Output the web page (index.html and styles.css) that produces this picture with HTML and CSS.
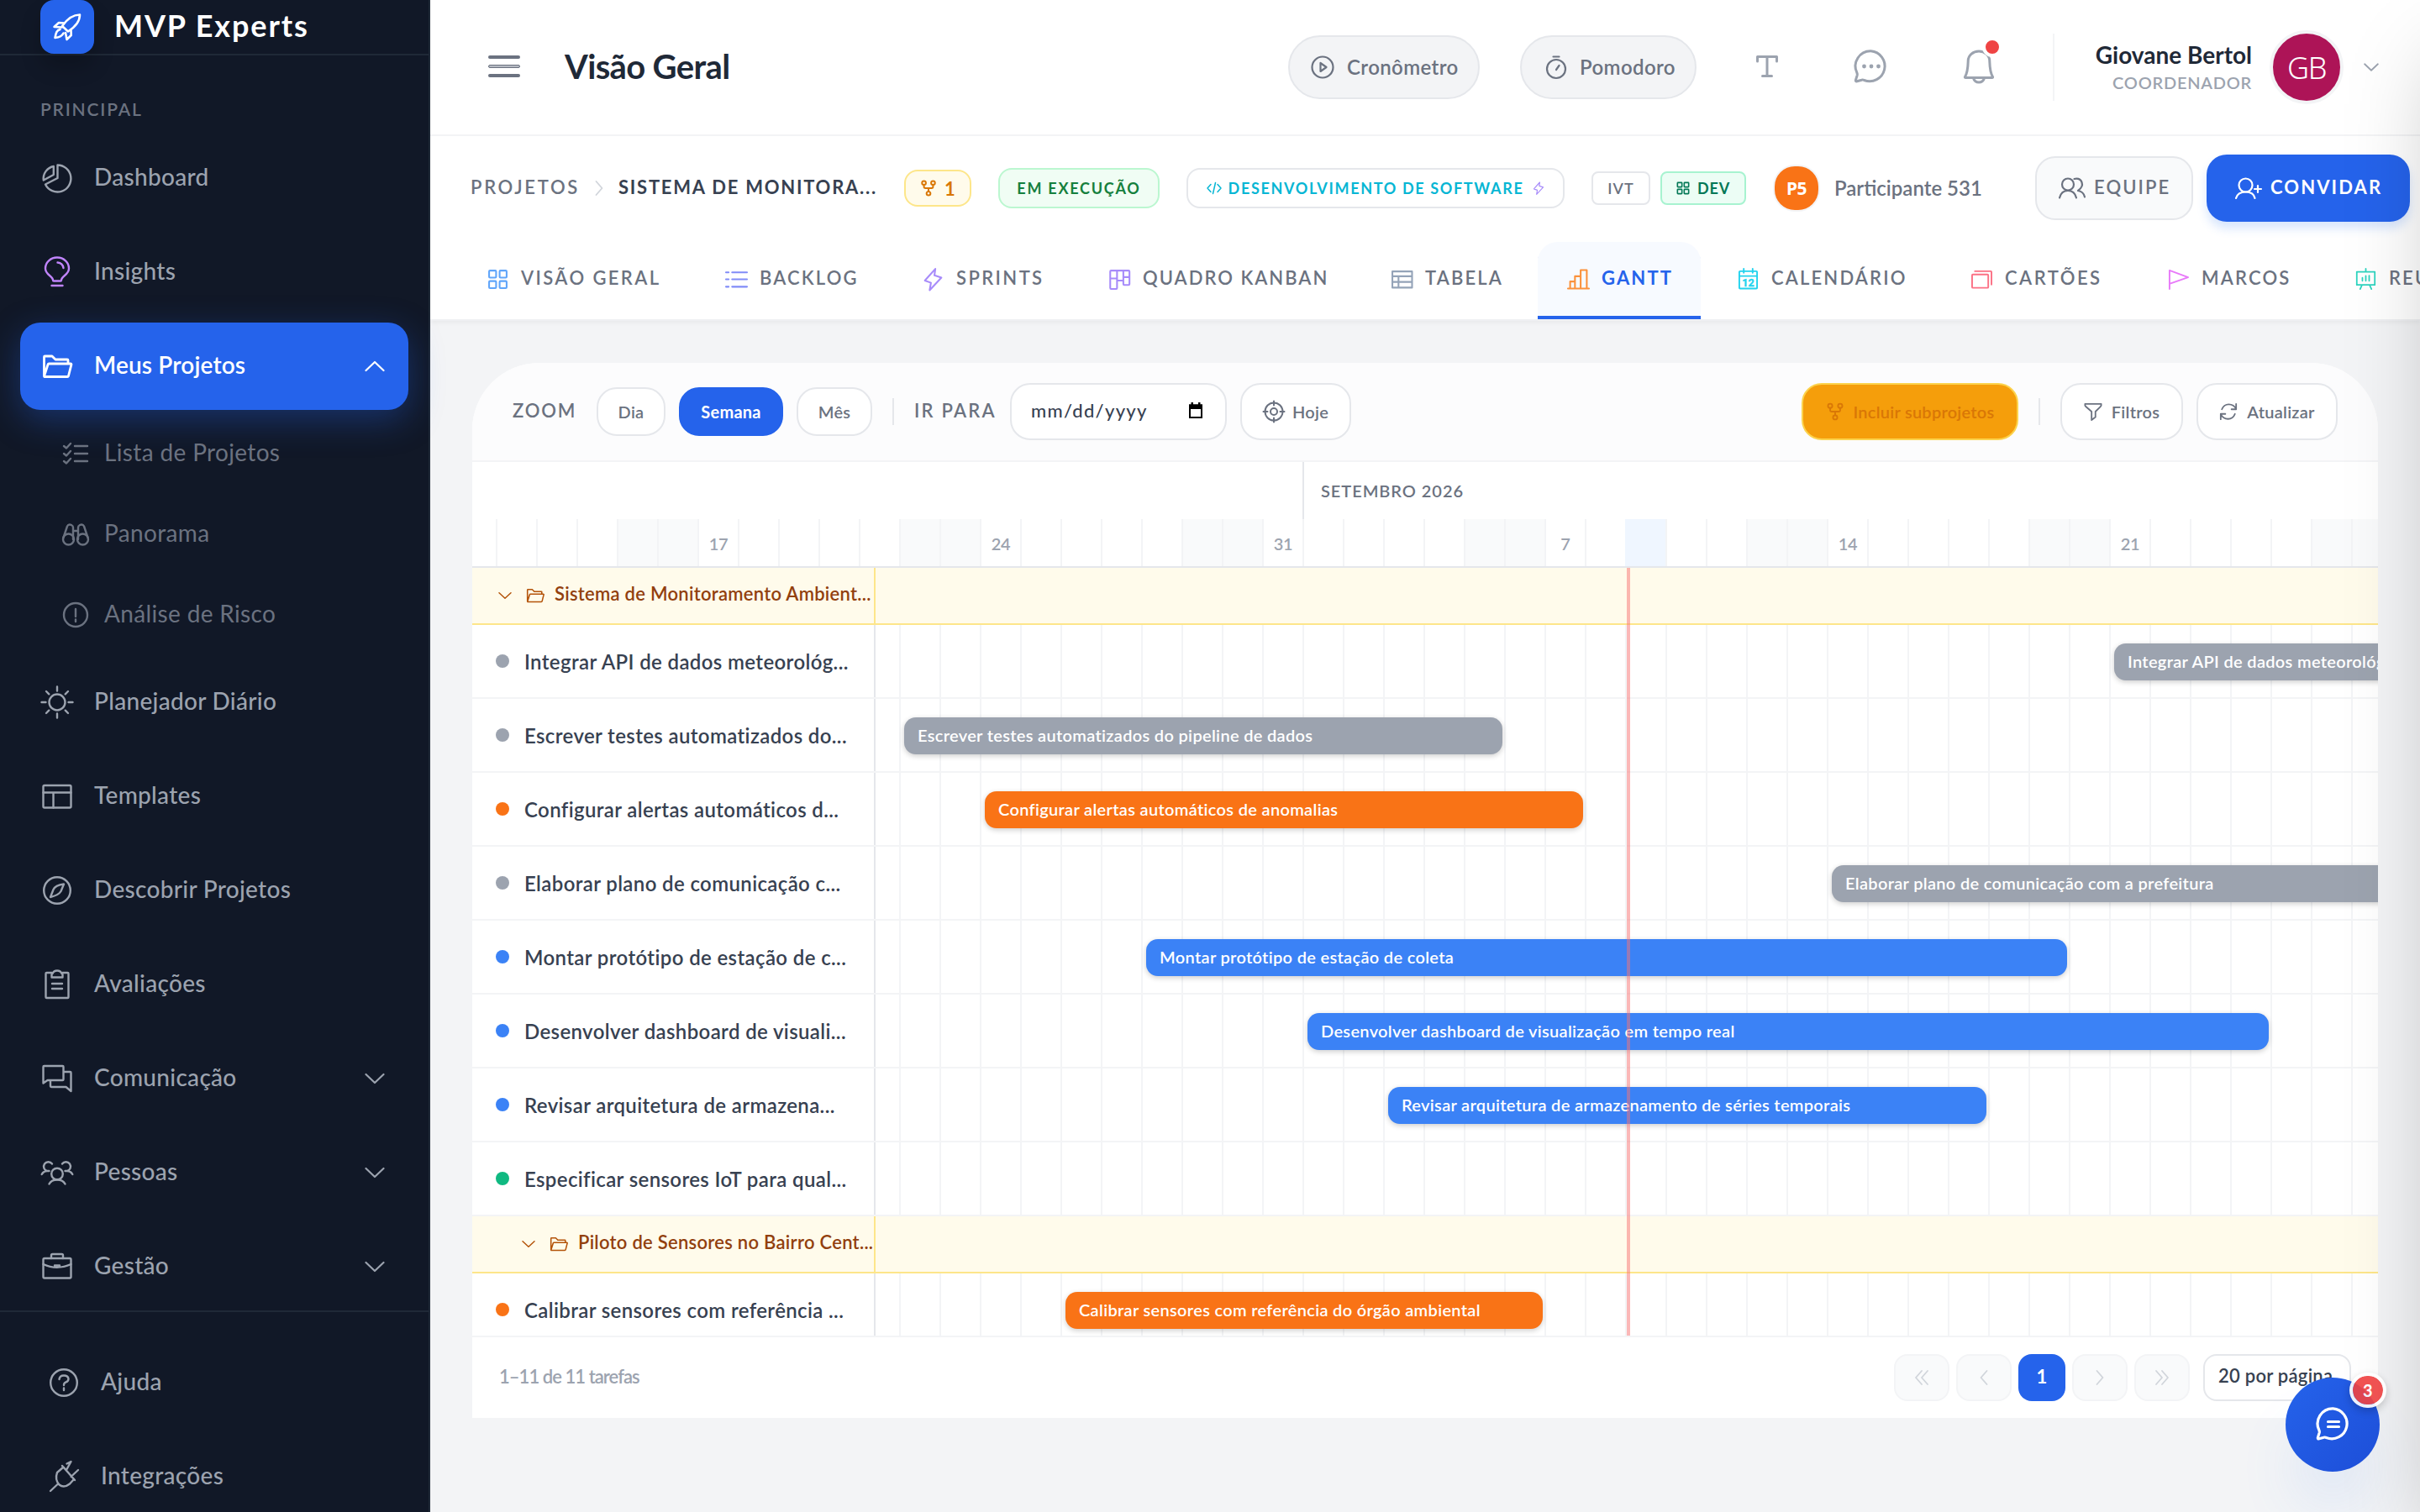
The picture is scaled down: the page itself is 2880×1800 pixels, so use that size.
FILE: index.html
```html
<!DOCTYPE html>
<html lang="pt-BR">
<head>
<meta charset="utf-8">
<title>MVP Experts – Visão Geral</title>
<link rel="stylesheet" href="styles.css">
</head>
<body>
<svg class="sprite" aria-hidden="true">
  <symbol id="i-down" viewBox="0 0 24 24"><path d="M1.500 7 12 17 22.500 7"/></symbol>
  <symbol id="i-up" viewBox="0 0 24 24"><path d="M1.500 17 12 7 22.500 17"/></symbol>
  <symbol id="i-folder" viewBox="0 0 40 40"><path d="M4.500 32V9q0-1 1-1H14l4 4h14q1 0 1 1v4M4.500 32 9 18q.3-1 1.300-1H36q1.200 0 .9 1.200L33.500 31.500q-.3 1-1.300 1H4.700"/></symbol>
  <symbol id="i-fork" viewBox="0 0 24 24"><circle cx="5.500" cy="4.500" r="2.800"/><circle cx="18.500" cy="4.500" r="2.800"/><circle cx="12" cy="19.500" r="2.800"/><path d="M5.500 7.300V10q0 2 2 2h9q2 0 2-2V7.300M12 12v4.700"/></symbol>
  <symbol id="i-grid" viewBox="0 0 24 24"><rect x="2" y="2" width="8" height="8" rx="1"/><rect x="14" y="2" width="8" height="8" rx="1"/><rect x="2" y="14" width="8" height="8" rx="1"/><rect x="14" y="14" width="8" height="8" rx="1"/></symbol>
  <symbol id="i-bolt" viewBox="0 0 24 28"><path d="M14.500 2 2.500 15.500l7 2.500L8 26.500 21.500 12l-8-2.500z"/></symbol>
</svg>

<div class="app">
  <aside class="sidebar">
    <div class="brand">
      <span class="brand-mark"><svg width="36" height="36" viewBox="0 0 36 36"><path d="M33 3.500C25 3.500 19 7 12 17l7 6.500C30 16.500 33 10.500 33 3.500ZM14.500 13.500 8 13 2.500 18l9 .5M22.500 21.500l.2 6.500-5.200 5-1.500-8M9.500 21c-4 1-5 4-6 10 5.500-.5 8.500-2 10-5.500"/></svg></span>
      <span class="brand-name">MVP Experts</span>
    </div>
    <div class="side-title">PRINCIPAL</div>
    <nav class="side-nav">
      <a class="nav-item"><svg viewBox="0 0 40 40"><path d="M20.500 4.500A16 16 0 1 1 6 27.500L20.500 20ZM15.800 6A15 15 0 0 0 3.800 22.500L15.800 16Z"/></svg><span class="t">Dashboard</span></a>
      <a class="nav-item insight"><svg viewBox="0 0 40 40"><path d="M15 29.500c0-5-9-6-9-14a14 13 0 0 1 28 0c0 8-9 9-9 14q0 1-1 1h-8q-1 0-1-1zM13.500 36h13M20.500 8.500q6 .5 7 6.500"/></svg><span class="t">Insights</span></a>
      <a class="nav-item active"><svg><use href="#i-folder"/></svg><span class="t">Meus Projetos</span><svg class="chev"><use href="#i-up"/></svg></a>
      <a class="nav-sub"><svg viewBox="0 0 32 32"><path d="M15 7h15M15 16h15M15 25h15M2 7l3 2.500L10 4M2 16l3 2.500L10 13M2 25l3 2.500 5-5.500"/></svg><span class="t">Lista de Projetos</span></a>
      <a class="nav-sub"><svg viewBox="0 0 32 32"><circle cx="7.500" cy="22" r="6.500"/><circle cx="24.500" cy="22" r="6.500"/><path d="M1.500 20 6 6.500q1.500-3 5-1.500 2 1 2 3v14M30.500 20 26 6.500q-1.500-3-5-1.500-2 1-2 3v14M13 12h6"/></svg><span class="t">Panorama</span></a>
      <a class="nav-sub"><svg viewBox="0 0 32 32"><circle cx="16" cy="16" r="14"/><path d="M16 9v9M16 21.500v2.500"/></svg><span class="t">Análise de Risco</span></a>
      <a class="nav-item"><svg viewBox="0 0 40 40"><circle cx="20" cy="20" r="9.500"/><path d="M20 1.500v5M20 33.500v5M1.500 20h5M33.500 20h5M7 7l3.300 3.300M29.700 29.700 33 33M7 33l3.300-3.300M29.700 10.300 33 7"/></svg><span class="t">Planejador Diário</span></a>
      <a class="nav-item"><svg viewBox="0 0 40 40"><rect x="3.500" y="7" width="33" height="26.500" rx="1.500"/><path d="M3.500 15.500h33M15.500 15.500v18"/></svg><span class="t">Templates</span></a>
      <a class="nav-item"><svg viewBox="0 0 40 40"><circle cx="20" cy="20" r="15.800"/><path d="M28 12.500c-6 .8-11 3-12.500 6.500L12 28c6-1.500 10.500-3.500 12.500-7z"/></svg><span class="t">Descobrir Projetos</span></a>
      <a class="nav-item"><svg viewBox="0 0 40 40"><path d="M13.500 6H7.500q-1 0-1 1v28q0 1 1 1h25q1 0 1-1V7q0-1-1-1h-6M13.500 11.500V8q0-1 1-1 1.500-3.500 5.500-3.500T25.500 7q1 0 1 1v3.500zM14 19h12M14 25h12"/></svg><span class="t">Avaliações</span></a>
      <a class="nav-item"><svg viewBox="0 0 40 40"><path d="M3.500 25.500V6q0-1 1-1h22q1 0 1 1v15q0 1-1 1h-18zM27.500 12h8q1 0 1 1v22l-6-5h-17q-1.500 0-1.500-1.500V22.500"/></svg><span class="t">Comunicação</span><svg class="chev"><use href="#i-down"/></svg></a>
      <a class="nav-item"><svg viewBox="0 0 40 40"><circle cx="20" cy="21.500" r="6.800"/><path d="M10.500 33.500q2.500-5 9.500-5t9.500 5M14 9.500A5.500 5.500 0 1 0 8 18q-4 0-6.300 4M8 18h2.500M26 9.500A5.500 5.500 0 1 1 32 18q4 0 6.300 4M32 18h-2.500"/></svg><span class="t">Pessoas</span><svg class="chev"><use href="#i-down"/></svg></a>
      <a class="nav-item"><svg viewBox="0 0 40 40"><rect x="3.500" y="10" width="33" height="23.500" rx="1.500"/><path d="M13 10V6.500Q13 5 14.500 5h11Q27 5 27 6.500V10M3.500 17q16 7.500 33 0M17 18.500h6"/></svg><span class="t">Gestão</span><svg class="chev"><use href="#i-down"/></svg></a>
    </nav>
    <nav class="side-foot">
      <a class="nav-item"><svg viewBox="0 0 40 40"><circle cx="20" cy="20" r="15.800"/><path d="M14.500 16q.5-4.500 5.500-4.500t5.500 4q0 3-3.500 4.200-2 .8-2 3.300M20 26.500V29"/></svg><span class="t">Ajuda</span></a>
      <a class="nav-item"><svg viewBox="0 0 40 40"><path d="M12 15l7.500-6.500L32 23l-5 5.500q-7 5.500-12.500 1-5.500-6-2.500-14.500zM4 37l9-8.500M23.500 4.500l5-2.500-5 9M37 12l-8.500 8M18 7l15 17"/></svg><span class="t">Integrações</span></a>
    </nav>
  </aside>

  <main class="main">
    <header class="topbar">
      <span class="burger"><i></i><i></i><i></i></span>
      <h1>Visão Geral</h1>
      <button class="pill crono"><svg viewBox="0 0 28 28"><circle cx="14" cy="14" r="12.500"/><path d="M11.500 9v10l7-5z"/></svg>Cronômetro</button>
      <button class="pill pomo"><svg viewBox="0 0 28 28"><circle cx="14" cy="16" r="11"/><path d="M10.500 1.500h7M14 17l3.500-5"/></svg>Pomodoro</button>
      <span class="tool tx"><svg width="28" height="28" viewBox="0 0 28 28"><path d="M2.500 8V2.500h23V8M14 2.500v23M8.500 25.500h11"/></svg></span>
      <span class="tool"><svg width="42" height="42" viewBox="0 0 42 42"><path d="M20.500 2.800A18 18 0 1 1 12.500 37.500q-1.500-.8-3-.3l-5.500 1.600q-2 .5-1.600-1.400l1.800-5.800q.4-1.500-.3-3A18 18 0 0 1 20.500 2.800Z"/><g class="dots"><circle cx="12.500" cy="21" r="2.400"/><circle cx="21" cy="21" r="2.400"/><circle cx="29.500" cy="21" r="2.400"/></g></svg></span>
      <span class="tool bell"><svg width="42" height="42" viewBox="0 0 42 42"><path d="M4.500 33.500c3.500-6 3.500-12 3.700-19a12.800 11.500 0 0 1 25.600 0c.2 7 .2 13 3.700 19q.5 1-.7 1H5.200q-1.200 0-.7-1zM14.500 35q1.500 5 6.500 5t6.500-5"/></svg><b class="dot"></b></span>
      <span class="rule"></span>
      <span class="who"><strong>Giovane Bertol</strong><small>COORDENADOR</small></span>
      <span class="avatar">GB</span>
      <svg class="who-chev"><use href="#i-down"/></svg>
    </header>

    <section class="subhead">
      <div class="crumbs">
        <span class="crumb">PROJETOS</span>
        <svg class="crumb-sep" viewBox="0 0 10 20"><path d="M1.500 2 8.500 10 1.500 18"/></svg>
        <span class="crumb-now">SISTEMA DE MONITORA...</span>
        <span class="chip c-sub"><svg><use href="#i-fork"/></svg>1</span>
        <span class="chip c-run">EM EXECUÇÃO</span>
        <span class="chip c-dev"><svg class="code" viewBox="0 0 18 16"><path d="M5 3.500 1 8l4 4.500M13 3.500 17 8l-4 4.500M10.500 1.500l-3 13"/></svg>DESENVOLVIMENTO DE SOFTWARE<svg class="bolt"><use href="#i-bolt"/></svg></span>
        <span class="chip c-ivt">IVT</span>
        <span class="chip c-green"><svg><use href="#i-grid"/></svg>DEV</span>
        <span class="p5">P5</span>
        <span class="p-name">Participante 531</span>
        <button class="btn equipe"><svg viewBox="0 0 34 28"><circle cx="12" cy="9.500" r="7"/><path d="M2 25.500q2-8.500 10-8.500t10 8.500M19.500 3q7-1.500 9 4t-4.500 10q6.500 1 8 7.500"/></svg><span class="t">EQUIPE</span></button>
        <button class="btn convidar"><svg viewBox="0 0 34 28"><circle cx="13.500" cy="10.500" r="8"/><path d="M2 26q2-7.500 11.500-7.500T24.500 26M28 11v8M24 15h8"/></svg><span class="t">CONVIDAR</span></button>
      </div>
      <nav class="tabs">
        <a class="tab k1"><svg><use href="#i-grid"/></svg><span class="t">VISÃO GERAL</span></a>
        <a class="tab k2"><svg viewBox="0 0 24 24"><path d="M7 4h17M7 12h17M7 20.500h17M0 4h3M0 12h3M0 20.500h3"/></svg><span class="t">BACKLOG</span></a>
        <a class="tab k3"><svg class="tall"><use href="#i-bolt"/></svg><span class="t">SPRINTS</span></a>
        <a class="tab k4"><svg viewBox="0 0 24 24"><path d="M1.200 22V3q0-1 1-1h20q1 0 1 1v14.500q0 1-1 1h-5q-1 0-1-1V2M9 2v20q0 1-1 1H2.200q-1 0-1-1M1.200 11h7.800M9 13.500h7.200M16.200 9.500h7"/></svg><span class="t">QUADRO KANBAN</span></a>
        <a class="tab k5"><svg viewBox="0 0 24 24"><path d="M1 3h22.500v18.500H1zM1 8.500h22.500M1 15h22.500M8 8.500v13"/></svg><span class="t">TABELA</span></a>
        <a class="tab k6 on"><svg viewBox="0 0 24 24"><path d="M0 22.500h24M2.500 22.500v-8H8M8 22.500V8.500h6.500M14.500 22.500V1.500h7v21"/></svg><span class="t">GANTT</span></a>
        <a class="tab k7"><svg viewBox="0 0 24 26"><path d="M2 3h20q1 0 1 1v19.500q0 1-1 1H2q-1 0-1-1V4q0-1 1-1zM1 9h22M6.500 0v5M17.500 0v5"/><text x="12" y="21.500">12</text></svg><span class="t">CALENDÁRIO</span></a>
        <a class="tab k8"><svg viewBox="0 0 26 24"><path d="M2 6h18q1 0 1 1v14.500q0 1-1 1H2q-1 0-1-1V7q0-1 1-1zM4.500 2H24q1 0 1 1v15.500"/></svg><span class="t">CARTÕES</span></a>
        <a class="tab k9"><svg viewBox="0 0 26 26"><path d="M2 25V2l23 8.500L2 18.500"/></svg><span class="t">MARCOS</span></a>
        <a class="tab k10"><svg viewBox="0 0 26 28"><path d="M1 4h24v17.500H1zM13 0v4M8 21.500 5.500 27M18 21.500l2.500 5.500M8.500 16v-4M13 16V9.500M17.500 16v-7"/></svg><span class="t">REUNIÕES</span></a>
      </nav>
    </section>

    <section class="card">
      <div class="toolbar">
        <span class="lab l-zoom">ZOOM</span>
        <button class="seg s1">Dia</button><button class="seg s2 on">Semana</button><button class="seg s3">Mês</button>
        <span class="vr"></span>
        <span class="lab l-ir">IR PARA</span>
        <span class="date"><span>mm/dd/yyyy</span><svg viewBox="0 0 18 20"><path d="M2 3.500h14v14.500H2zM2 5.500h14"/><path class="fill" d="M1 2.500h16V8H1zM3.500 0h2.500v3H3.500zM12 0h2.500v3H12z"/></svg></span>
        <button class="tb hoje"><svg viewBox="0 0 26 26"><circle cx="13" cy="13" r="10.500"/><circle cx="13" cy="13" r="4"/><path d="M13 .5v5M13 20.500v5M.5 13h5M20.500 13h5"/></svg>Hoje</button>
        <button class="tb incl"><svg><use href="#i-fork"/></svg>Incluir subprojetos</button>
        <span class="vr v2"></span>
        <button class="tb filt"><svg viewBox="0 0 24 24"><path d="M1.500 2h21q.5 2-1 3.500L15 12v7l-5 4V12L2.500 5.500Q1 4 1.500 2z"/></svg>Filtros</button>
        <button class="tb atu"><svg viewBox="0 0 24 24"><path d="M3.500 9Q6 2.500 12.500 2.500T22 8.500M22 2v7h-6M20.500 15Q18 21.500 11.500 21.500T2 15.500M2 22v-7h6"/></svg>Atualizar</button>
      </div>

      <div class="months"><span class="aug"></span><span class="sep">SETEMBRO 2026</span></div>
      <div class="days">
        <div class="wk"><span>17</span></div><div class="wk"><span>24</span></div><div class="wk"><span>31</span></div>
        <div class="wk"><span>7</span><i class="today"></i></div><div class="wk"><span>14</span></div><div class="wk"><span>21</span></div>
      </div>

      <div class="rows">
        <div class="group"><div class="g-name"><svg class="g-chev"><use href="#i-down"/></svg><svg class="g-fold"><use href="#i-folder"/></svg><span>Sistema de Monitoramento Ambient...</span></div></div>
        <div class="row"><div class="task gray">Integrar API de dados meteorológ...</div><div class="track"><div class="bar gray" style="margin-left:1474px;width:520px">Integrar API de dados meteorológicos</div></div></div>
        <div class="row"><div class="task gray">Escrever testes automatizados do...</div><div class="track"><div class="bar gray" style="margin-left:34px;width:712px">Escrever testes automatizados do pipeline de dados</div></div></div>
        <div class="row"><div class="task orange">Configurar alertas automáticos d...</div><div class="track"><div class="bar orange" style="margin-left:130px;width:712px">Configurar alertas automáticos de anomalias</div></div></div>
        <div class="row"><div class="task gray">Elaborar plano de comunicação c...</div><div class="track"><div class="bar gray" style="margin-left:1138px;width:712px">Elaborar plano de comunicação com a prefeitura</div></div></div>
        <div class="row"><div class="task blue">Montar protótipo de estação de c...</div><div class="track"><div class="bar blue" style="margin-left:322px;width:1096px">Montar protótipo de estação de coleta</div></div></div>
        <div class="row"><div class="task blue">Desenvolver dashboard de visuali...</div><div class="track"><div class="bar blue" style="margin-left:514px;width:1144px">Desenvolver dashboard de visualização em tempo real</div></div></div>
        <div class="row"><div class="task blue">Revisar arquitetura de armazena...</div><div class="track"><div class="bar blue" style="margin-left:610px;width:712px">Revisar arquitetura de armazenamento de séries temporais</div></div></div>
        <div class="row"><div class="task green">Especificar sensores IoT para qual...</div><div class="track"></div></div>
        <div class="group nested"><div class="g-name"><svg class="g-chev"><use href="#i-down"/></svg><svg class="g-fold"><use href="#i-folder"/></svg><span>Piloto de Sensores no Bairro Cent...</span></div></div>
        <div class="row"><div class="task orange">Calibrar sensores com referência ...</div><div class="track"><div class="bar orange" style="margin-left:226px;width:568px">Calibrar sensores com referência do órgão ambiental</div></div></div>
        <i class="now"></i>
      </div>

      <footer class="pager">
        <span class="count">1–11 de 11 tarefas</span>
        <span class="pg"><svg viewBox="0 0 20 20"><path d="M10 2 3 10l7 8M17 2l-7 8 7 8"/></svg></span>
        <span class="pg"><svg viewBox="0 0 20 20"><path d="M13.500 2 6.500 10l7 8"/></svg></span>
        <span class="pg cur">1</span>
        <span class="pg"><svg viewBox="0 0 20 20"><path d="M6.500 2l7 8-7 8"/></svg></span>
        <span class="pg"><svg viewBox="0 0 20 20"><path d="M3 2l7 8-7 8M10 2l7 8-7 8"/></svg></span>
        <span class="size">20 por página</span>
      </footer>
    </section>
  </main>
</div>

<div class="drawer"></div>
<div class="fab"><svg width="42" height="42" viewBox="0 0 42 42"><path d="M20.500 2.800A18 18 0 1 1 12.500 37.500q-1.500-.8-3-.3l-5.500 1.600q-2 .5-1.600-1.400l1.800-5.800q.4-1.500-.3-3A18 18 0 0 1 20.500 2.800ZM14.500 18.500h13M14.500 24.500h13"/></svg><b>3</b></div>
</body>
</html>
```
FILE: styles.css
```css
* { box-sizing: border-box; }
body { margin: 0; width: 2880px; height: 1800px; overflow: hidden; position: relative; background: #f3f4f6; font-family: "Lato", "Noto Sans", sans-serif; font-size: 28px; letter-spacing: .2px; color: #374151; }
svg { fill: none; stroke: currentColor; stroke-width: 2.4; stroke-linecap: round; stroke-linejoin: round; flex: none; overflow: visible; display: block; }
button { font: inherit; letter-spacing: inherit; color: inherit; padding: 0; margin: 0; }
.sprite { position: absolute; width: 0; height: 0; }
.t { padding-bottom: 4px; white-space: nowrap; }
.app { display: flex; height: 1800px; }

/* Sidebar */
.sidebar { width: 512px; flex: none; background: #111827; border-right: 2px solid #1f2937; color: #9ca3af; }
.brand { height: 66px; border-bottom: 2px solid #1f2937; padding-left: 48px; display: flex; align-items: center; gap: 24px; }
.brand-mark { width: 64px; height: 64px; border-radius: 16px; background: #2563eb; color: #fff; display: flex; align-items: center; justify-content: center; box-shadow: 0 16px 24px rgba(0,0,0,.2); }
.brand-mark svg { stroke-width: 2.6; }
.brand-name { font-size: 36px; font-weight: 700; color: #fff; letter-spacing: 1.9px; padding-bottom: 4px; }
.side-title { font-size: 22px; font-weight: 600; letter-spacing: 1px; color: #6b7280; height: 94px; padding: 50px 0 0 48px; line-height: 28px; font-size: 21px; letter-spacing: 1.8px; }
.side-nav { display: flex; flex-direction: column; padding: 0 24px; height: 1402px; border-bottom: 2px solid #1f2937; }
.nav-item { height: 104px; margin-bottom: 8px; border-radius: 24px; padding: 0 24px; display: flex; align-items: center; gap: 24px; font-weight: 500; flex: none; letter-spacing: .3px; }
.nav-item > svg { width: 40px; height: 40px; }
.nav-item .chev { width: 24px; height: 24px; margin-left: auto; margin-right: 4px; stroke-width: 2.2; }
.insight svg { color: #c084fc; }
.nav-item.active { background: #2563eb; color: #fff; font-weight: 600; letter-spacing: .15px; box-shadow: 0 12px 40px rgba(37,99,235,.35); }
.nav-item.active > svg:first-child { stroke-width: 2.8; }
.nav-sub { height: 96px; padding: 4px 0 12px 50px; display: flex; align-items: center; gap: 18px; color: #6b7280; flex: none; letter-spacing: .35px; }
.nav-sub > svg { width: 32px; height: 32px; }
.side-foot { padding: 32px 0 0 32px; }

/* Top bar */
.main { flex: 1; min-width: 0; overflow: hidden; }
.topbar { height: 162px; background: #fff; border-bottom: 2px solid #f3f4f6; display: flex; align-items: center; padding-left: 69px; box-shadow: 0 2px 4px rgba(0,0,0,.04); }
.burger { width: 38px; display: flex; flex-direction: column; gap: 7px; margin-right: 53px; padding-bottom: 2px; }
.burger i { height: 4px; border-radius: 2px; background: #6b7280; }
.burger i:nth-child(2) { border: 1px solid #6b7280; background: #b5b9c2; }
h1 { margin: 0 auto 0 0; font-size: 40px; font-weight: 700; letter-spacing: -.65px; color: #1f2937; padding-bottom: 3px; }
.pill { height: 76px; border: 2px solid #e5e7eb; border-radius: 38px; background: #f3f4f6; color: #6b7280; font-size: 24px; font-weight: 600; letter-spacing: .4px; display: flex; align-items: center; gap: 15px; padding: 0 0 1px 25px; }
.pill svg { width: 28px; height: 28px; stroke-width: 2.2; }
.crono { width: 228px; margin-right: 48px; }
.pomo { width: 210px; margin-right: 46px; padding-left: 27px; gap: 14px; }
.tool { width: 76px; height: 76px; display: flex; align-items: center; justify-content: center; color: #9ca3af; margin-right: 48px; position: relative; padding-bottom: 3px; }
.tool svg { stroke-width: 3; }
.tool .dots { fill: #9ca3af; stroke: none; }
.bell { margin: 0 50px 0 4px; }
.dot { position: absolute; right: 10px; top: 2px; width: 24px; height: 24px; border-radius: 50%; background: #ef4444; border: 4px solid #fff; }
.rule { width: 2px; height: 80px; background: #f3f4f6; }
.who { width: 235px; display: flex; flex-direction: column; align-items: flex-end; white-space: nowrap; }
.who strong { font-size: 28px; line-height: 34px; font-weight: 700; color: #1f2937; letter-spacing: 0; }
.who small { font-size: 20px; line-height: 28px; font-weight: 600; color: #9ca3af; letter-spacing: .75px; padding-top: 2px; }
.avatar { width: 88px; height: 88px; margin: 0 24px 0 21px; border: 4px solid #f3f4f6; border-radius: 50%; background: #ad1457; color: #fff; font: 300 36px "Noto Sans", "Open Sans", sans-serif; letter-spacing: -1.5px; display: flex; align-items: center; justify-content: center; }
.who-chev { width: 18px; height: 18px; color: #9ca3af; stroke-width: 2.4; margin-right: 49px; }

/* Project header */
.subhead { height: 220px; background: #fff; border-bottom: 2px solid #eff0f3; box-shadow: 0 3px 5px rgba(0,0,0,.04); }
.crumbs { height: 124px; display: flex; align-items: center; padding-left: 48px; white-space: nowrap; }
.crumb { width: 148px; font-size: 22px; font-weight: 600; letter-spacing: 2.7px; color: #6b7280; padding-bottom: 4px; }
.crumb-sep { width: 10px; height: 20px; color: #d1d5db; stroke-width: 1.8; margin-right: 18px; }
.crumb-now { width: 340px; font-size: 22px; font-weight: 700; letter-spacing: 1.75px; padding-bottom: 4px; }
.chip { display: flex; align-items: center; justify-content: center; border: 2px solid; border-radius: 16px; height: 48px; font-size: 18px; font-weight: 700; letter-spacing: 1.75px; }
.c-sub { width: 80px; height: 44px; background: #fffbeb; border-color: #fde68a; color: #d97706; gap: 9px; font-size: 22px; letter-spacing: 0; margin-right: 32px; }
.c-sub svg { width: 20px; height: 20px; stroke-width: 2.4; }
.c-run { width: 192px; background: #f0fdf4; border-color: #bbf7d0; color: #15803d; margin-right: 32px; }
.c-dev { width: 450px; border-color: #e5e7eb; color: #06b6d4; margin-right: 32px; gap: 8px; letter-spacing: 1.65px; }
.c-dev .code { width: 18px; height: 16px; stroke-width: 1.5; }
.c-dev .bolt { width: 14px; height: 18px; color: #a78bfa; stroke-width: 2; margin-left: 3px; }
.c-ivt { width: 70px; height: 40px; border-radius: 8px; border-color: #e5e7eb; color: #6b7280; font-weight: 600; letter-spacing: 1px; margin-right: 12px; }
.c-green { width: 102px; height: 40px; border-radius: 8px; background: #ecfdf5; border-color: #a7f3d0; color: #047857; gap: 9px; letter-spacing: .9px; margin-right: 34px; }
.c-green svg { width: 16px; height: 16px; stroke-width: 2.4; }
.p5 { width: 52px; height: 52px; border-radius: 24px; background: #f97316; color: #fff; font: 700 21px "Noto Sans", sans-serif; letter-spacing: -.5px; display: flex; align-items: center; justify-content: center; box-shadow: 0 0 0 2px #f3f4f6; margin-right: 19px; }
.p-name { font-size: 24px; font-weight: 600; color: #6b7280; letter-spacing: 0; padding-bottom: 1px; }
.btn { display: flex; align-items: center; font-size: 22px; font-weight: 600; letter-spacing: 2.1px; border-radius: 24px; gap: 9px; }
.btn svg { width: 34px; height: 28px; stroke-width: 2.2; }
.equipe { width: 188px; height: 76px; margin: 0 16px 0 auto; background: #f9fafb; border: 2px solid #e5e7eb; color: #6b7280; padding-left: 25px; }
.convidar { width: 242px; height: 80px; margin-right: 12px; background: #2563eb; border: 0; color: #fff; padding-left: 33px; font-weight: 700; box-shadow: 0 8px 12px rgba(59,130,246,.2); }
.tabs { display: flex; gap: 8px; padding-left: 32px; height: 92px; margin-top: 2px; overflow: hidden; }
.tab { width: 228px; flex: none; padding: 0 0 0 36px; display: flex; align-items: center; gap: 14px; font-size: 22px; font-weight: 600; letter-spacing: 2.15px; color: #6b7280; border-bottom: 4px solid transparent; border-radius: 24px 24px 0 0; }
.tab svg { width: 25px; height: 25px; margin-right: 1px; stroke-width: 2; }
.tab.on { color: #2563eb; font-weight: 700; background: #f7faff; box-shadow: inset 0 -4px #2563eb; border-bottom: 0; padding-bottom: 4px; }
.k1 { width: 276px; letter-spacing: 2.4px; } .k1 svg { color: #60a5fa; }
.k2 { width: 226px; } .k2 svg { color: #818cf8; }
.k3 { width: 214px; letter-spacing: 2.4px; } .k3 svg { color: #a78bfa; }
.k4 { width: 328px; letter-spacing: 2px; } .k4 svg { color: #a78bfa; }
.k5 { width: 202px; } .k5 svg { color: #94a3b8; }
.k6 { width: 194px; } .k6 svg { color: #fb923c; }
.k7 { width: 270px; } .k7 svg { color: #22d3ee; }
.k8 { width: 226px; letter-spacing: 2.5px; } .k8 svg { color: #fb7185; }
.k9 { width: 215px; } .k9 svg { color: #e879f9; }
.k10 svg { color: #2dd4bf; }
.tab text { font: 700 13px "Roboto", sans-serif; letter-spacing: 0; text-anchor: middle; fill: currentColor; stroke: currentColor; stroke-width: .4; }
.tab .tall { height: 29px; }

/* Gantt card */
.card { margin: 50px 50px 0; height: 1256px; background: #fff; border-radius: 80px 80px 0 0; overflow: hidden; }
.toolbar { height: 118px; background: #fcfcfd; border-bottom: 2px solid #f3f4f6; display: flex; align-items: center; padding: 0 48px; font-size: 20px; font-weight: 600; color: #6b7280; }
.lab { font-size: 22px; letter-spacing: 2.2px; padding-bottom: 4px; white-space: nowrap; }
.l-zoom { width: 100px; letter-spacing: 1.8px; }
.l-ir { width: 114px; }
.seg, .tb, .date { border: 2px solid #e5e7eb; border-radius: 24px; background: #fff; display: flex; align-items: center; justify-content: center; letter-spacing: .25px; }
.seg { height: 58px; margin-right: 16px; }
.s1 { width: 82px; } .s2 { width: 124px; } .s3 { width: 90px; margin-right: 24px; }
.seg.on { background: #2563eb; border-color: #2563eb; color: #fff; font-weight: 700; }
.vr { width: 2px; height: 32px; background: #e5e7eb; margin-right: 24px; }
.date { width: 258px; height: 68px; margin-right: 16px; justify-content: space-between; padding: 2px 26px 5px 23px; font-size: 22px; font-weight: 500; color: #374151; letter-spacing: 1.3px; }
.date svg { width: 18px; height: 20px; color: #000; stroke-width: 2; stroke-linejoin: miter; }
.date .fill { fill: #000; stroke: none; }
.tb { height: 68px; gap: 9px; }
.tb svg { width: 26px; height: 26px; stroke-width: 2; }
.hoje { width: 132px; margin-right: auto; }
.incl { width: 258px; background: #f59e0b; border-color: #fcd34d; color: #d97706; margin-right: 24px; gap: 11px; }
.incl svg, .filt svg, .atu svg { width: 22px; height: 22px; }
.filt { width: 146px; margin-right: 16px; gap: 11px; }
.atu { width: 168px; gap: 11px; margin-right: 0; }
.months { height: 68px; display: flex; }
.aug { width: 988px; }
.sep { border-left: 2px solid #e5e7eb; padding-left: 20px; line-height: 68px; font-size: 20px; font-weight: 600; letter-spacing: .95px; color: #6b7280; }
.days { height: 58px; padding-left: 268px; display: flex; border-bottom: 2px solid #e5e7eb;
  background: repeating-linear-gradient(90deg, #f3f4f6 0 2px, transparent 2px 48px) 28px 0 / 2240px 100% no-repeat, repeating-linear-gradient(90deg, #f9fafb 0 96px, transparent 96px 336px) 172px 0 / 2240px 100% no-repeat; }
.wk { width: 336px; flex: none; display: flex; height: 56px; }
.wk:last-child { width: auto; }
.wk span { width: 50px; text-align: center; line-height: 58px; font-size: 20px; font-weight: 600; color: #9ca3af; letter-spacing: -.3px; }
.today { width: 48px; margin-left: 46px; background: #eff6ff; }
.rows { height: 914px; overflow: hidden; position: relative; }
.group { height: 68px; background: #fffbeb; border-bottom: 2px solid #fde68a; }
.g-name { width: 480px; height: 66px; border-right: 2px solid #fde68a; padding: 0 0 6px 31px; display: flex; align-items: center; font-size: 22px; font-weight: 600; color: #92400e; letter-spacing: .27px; white-space: nowrap; }
.nested .g-name { padding-left: 59px; }
.g-name svg { color: #b45309; }
.g-chev { width: 16px; height: 16px; margin: 5px 16px 0 0; stroke-width: 2.2; }
.g-fold { width: 24px; height: 24px; margin: 6px 11px 0 0; stroke-width: 2.6; }
.row { height: 88px; display: flex; border-bottom: 2px solid #f3f4f6; }
.task { width: 480px; flex: none; border-right: 2px solid #e5e7eb; padding-left: 28px; display: flex; align-items: center; font-size: 24px; font-weight: 600; letter-spacing: .37px; white-space: nowrap; }
.task::before { content: ""; width: 16px; height: 16px; border-radius: 50%; margin-right: 18px; background: var(--c); }
.track { flex: 1; overflow: hidden; padding-top: 22px; background: repeating-linear-gradient(90deg, #f3f4f6 0 2px, transparent 2px 48px) 28px 0 / 100% 100% no-repeat; }
.bar { height: 44px; border-radius: 14px; background: var(--c); color: #fff; font-size: 20px; font-weight: 600; line-height: 42px; padding-left: 16px; letter-spacing: .32px; white-space: nowrap; box-shadow: 0 2px 6px rgba(0,0,0,.2); }
.gray { --c: #9ca3af; } .orange { --c: #f97316; } .blue { --c: #3b82f6; } .green { --c: #10b981; }
.now { position: absolute; left: 1374px; top: 0; bottom: 0; width: 4px; background: rgba(248,113,113,.5); }
.pager { height: 98px; border-top: 2px solid #f3f4f6; padding: 0 32px; display: flex; align-items: center; gap: 8px; }
.count { margin-right: auto; font-size: 22px; font-weight: 600; color: #9ca3af; letter-spacing: -.95px; padding-bottom: 4px; }
.pg { width: 66px; height: 56px; border: 2px solid #f3f4f6; border-radius: 16px; background: #f9fafb; color: #d1d5db; display: flex; align-items: center; justify-content: center; }
.pg svg { width: 20px; height: 20px; stroke-width: 1.8; }
.pg.cur { width: 56px; background: #2563eb; border: 0; color: #fff; font-size: 22px; font-weight: 700; padding-bottom: 3px; }
.size { width: 176px; height: 56px; margin-left: 8px; border: 2px solid #e5e7eb; border-radius: 16px; padding-left: 16px; font-size: 22px; font-weight: 600; line-height: 48px; white-space: nowrap; letter-spacing: .25px; }

.drawer { position: absolute; left: 2880px; top: 0; width: 800px; height: 1800px; box-shadow: 0 50px 100px -24px rgba(0,0,0,.25); }
.fab { position: absolute; left: 2720px; top: 1640px; width: 112px; height: 112px; border-radius: 50%; background: linear-gradient(135deg, #2563eb, #1d4ed8); color: #fff; display: flex; align-items: center; justify-content: center; box-shadow: 0 50px 80px -20px rgba(59,130,246,.2); }
.fab svg { stroke-width: 3.2; margin: -3px 0 0 2px; }
.fab b { position: absolute; left: 76px; top: -6px; width: 44px; height: 42px; border: 4px solid #fff; border-radius: 22px; background: #ef4444; background-clip: padding-box; opacity: .92; font-size: 20px; font-weight: 700; line-height: 34px; text-align: center; box-shadow: 0 4px 10px rgba(0,0,0,.2); }
```
